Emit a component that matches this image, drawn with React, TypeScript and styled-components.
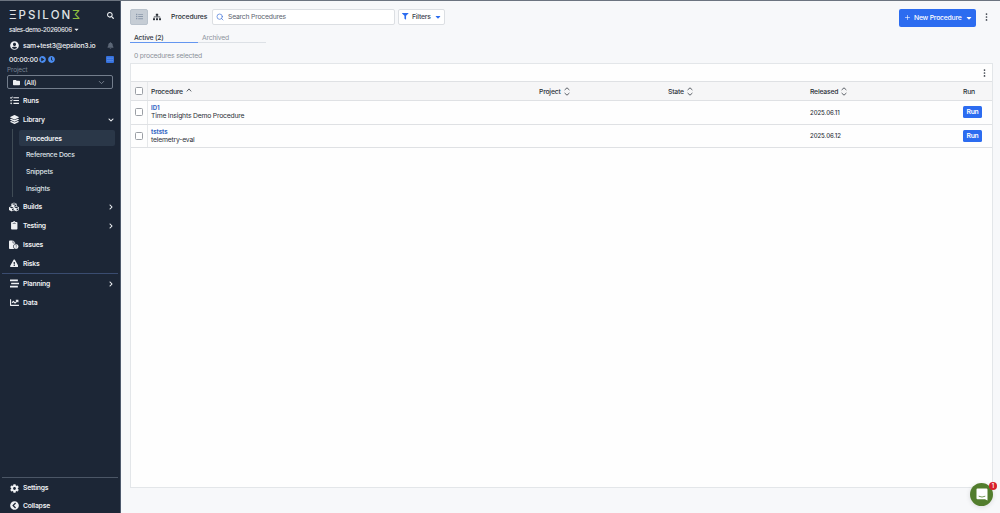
import React from "react";
import styled, { createGlobalStyle, css } from "styled-components";
import {
  FaBell,
  FaCaretDown,
  FaChartLine,
  FaChevronCircleLeft,
  FaChevronDown,
  FaChevronRight,
  FaClipboard,
  FaClock,
  FaCog,
  FaCubes,
  FaExclamationTriangle,
  FaFilter,
  FaFolder,
  FaLayerGroup,
  FaList,
  FaPlayCircle,
  FaSearch,
  FaSitemap,
  FaStream,
  FaTasks,
  FaUserCircle,
} from "react-icons/fa";
import { FaFileCircleExclamation } from "react-icons/fa6";
import { FiChevronDown, FiPlus, FiSearch } from "react-icons/fi";

const GlobalStyle = createGlobalStyle`
  * { box-sizing: border-box; }
  body {
    margin: 0;
    font-family: Inter, "Liberation Sans", sans-serif;
    font-size: 6.8px;
    letter-spacing: -0.2px;
    color: #2b3038;
    background: #f7f8fa;
  }
  svg { display: block; flex: none; }
`;

const Page = styled.div`
  display: flex;
  height: 513px;
  border-top: 1px solid #6c7480;
  overflow: hidden;
`;

const Sidebar = styled.nav`
  display: flex;
  flex-direction: column;
  width: 121px;
  flex: none;
  background: #1c2636;
  color: #eef0f3;
  border-right: 1px solid #4d596c;
`;

const SideLine = styled.div<{ $h: number }>`
  display: flex;
  align-items: center;
  gap: 1.5px;
  height: ${(p) => p.$h}px;
  padding: 0 6px 0 9px;
  font-weight: 500;
  white-space: nowrap;
`;

const BrandLine = styled(SideLine)`
  padding-top: 3px;
`;

const AccountLine = styled(SideLine)`
  gap: 0;
  margin-top: 4px;
`;

const Workspace = styled.span`
  font-size: 6.2px;
  letter-spacing: -0.32px;
`;

const Logo = styled.div`
  display: flex;
  justify-content: space-between;
  width: 71px;
  font-size: 11.5px;
  line-height: 12px;
  letter-spacing: 0;
  font-weight: 500;
  color: #dfe2e5;
`;

const LogoThree = styled.span`
  color: #8fbf3f;
  transform: scaleX(-1);
`;

const Push = styled.span`
  display: flex;
  margin-left: auto;
`;

const Label = styled.div`
  margin-top: 2px;
  padding-left: 7px;
  height: 9px;
  font-size: 6.4px;
  letter-spacing: -0.1px;
  line-height: 9px;
  color: #7b8593;
`;

const ProjectSelect = styled.div`
  display: flex;
  align-items: center;
  gap: 4px;
  height: 14px;
  margin: 0 7px 2px;
  padding: 0 6px 0 5px;
  border: 1px solid #737d8c;
  border-radius: 2px;
  font-weight: 500;
`;

const NavItem = styled.div<{ $h?: number }>`
  display: flex;
  align-items: center;
  flex: none;
  height: ${(p) => p.$h ?? 19}px;
  padding: 0 6px 0 9px;
  font-weight: 600;
  line-height: 10px;
`;

const NavIcon = styled.span`
  display: flex;
  justify-content: center;
  width: 10px;
  margin-right: 4px;
`;

const SubNav = styled.div`
  display: flex;
  flex-direction: column;
  margin-left: 12px;
  padding: 1px 5px 0 6px;
  height: 68px;
  border-left: 1px solid #3f4b55;
`;

const SubItem = styled.div<{ $active?: boolean }>`
  display: flex;
  align-items: center;
  height: 17px;
  padding-left: 7px;
  font-weight: 500;
  color: #dfe3e8;
  border-radius: 2px;
  ${(p) =>
    p.$active &&
    css`
      height: 16px;
      font-weight: 600;
      color: #f2f4f6;
      background: #2a3748;
    `}
`;

const Rule = styled.div<{ $color: string }>`
  height: 1px;
  margin: 0 2px;
  background: ${(p) => p.$color};
`;

const Grow = styled.div`
  flex: 1;
`;

const Main = styled.main`
  display: flex;
  flex-direction: column;
  flex: 1;
  min-width: 0;
  padding: 7px 7px 25px 9px;
`;

const Toolbar = styled.header`
  display: flex;
  align-items: center;
  height: 17px;
  padding-right: 5px;
`;

const ViewToggle = styled.div<{ $active?: boolean }>`
  display: flex;
  align-items: center;
  justify-content: center;
  width: 18px;
  height: 16px;
  border-radius: 2px;
  color: #2b3038;
  ${(p) =>
    p.$active &&
    css`
      color: #8b98aa;
      background: #c6cdd5;
      border: 1px solid #b9c2cc;
    `}
`;

const Title = styled.h1`
  margin: 0 5px;
  width: 36px;
  font-size: 6.8px;
  letter-spacing: -0.1px;
  font-weight: 500;
`;

const SearchBox = styled.div`
  display: flex;
  align-items: center;
  gap: 4px;
  width: 183px;
  height: 16px;
  padding-left: 3px;
  color: #5d6470;
  background: #fff;
  border: 1px solid #dcdfe3;
  border-radius: 2px;
`;

const FilterButton = styled.div`
  display: flex;
  align-items: center;
  gap: 3.500px;
  width: 47px;
  height: 16px;
  margin-left: 3px;
  padding-left: 3px;
  font-weight: 500;
  color: #3b4350;
  background: #fff;
  border: 1px solid #dcdfe3;
  border-radius: 2px;
`;

const PrimaryButton = styled.div`
  display: flex;
  align-items: center;
  gap: 3px;
  width: 77px;
  height: 18px;
  margin: 2px 9px 0 auto;
  padding-left: 5px;
  font-weight: 500;
  white-space: nowrap;
  color: #fff;
  background: #2c6cf0;
  border-radius: 2px;
`;

const Tabs = styled.div`
  display: flex;
  height: 14px;
  margin-top: 4px;
`;

const Tab = styled.div<{ $active?: boolean }>`
  width: 68px;
  height: 14px;
  padding-left: 4px;
  line-height: 17px;
  font-weight: ${(p) => (p.$active ? 500 : 400)};
  color: ${(p) => (p.$active ? "#343a44" : "#8e949d")};
  border-bottom: 1px solid ${(p) => (p.$active ? "#6496f0" : "#dde1e6")};
`;

const Selected = styled.div`
  height: 20px;
  padding: 8px 0 0 4px;
  line-height: 9px;
  color: #8b9199;
`;

const Grid = styled.section`
  display: flex;
  flex-direction: column;
  flex: 1;
  background: #fefefe;
  border: 1px solid #e3e6e9;
`;

const GridBar = styled.div`
  display: flex;
  align-items: center;
  justify-content: flex-end;
  height: 17px;
  padding-right: 6px;
`;

const Row = styled.div<{ $head?: boolean }>`
  display: grid;
  grid-template-columns: 17px 388px 129px 142px 153px 1fr;
  align-items: center;
  height: 23.5px;
  border-bottom: 1px solid #dfe1e4;
  ${(p) =>
    p.$head &&
    css`
      height: 20px;
      font-weight: 500;
      background: #f6f6f7;
      border-top: 1px solid #dfe1e4;
    `}
`;

const CheckCell = styled.div`
  display: flex;
  align-items: center;
  height: 100%;
  padding-left: 4px;
  border-right: 1px solid #e6e8ea;
`;

const Checkbox = styled.span`
  width: 8px;
  height: 8px;
  background: #fff;
  border: 1px solid #9b9fa5;
  border-radius: 1.5px;
`;

const Cell = styled.div`
  display: flex;
  align-items: center;
  gap: 3px;
  padding-left: 3px;
`;

const ProcedureCell = styled.div`
  padding-left: 3px;
  line-height: 8px;
`;

const Code = styled.div`
  font-size: 6px;
  letter-spacing: 0;
  font-weight: 700;
  color: #3465c4;
`;

const DateText = styled.span`
  font-size: 6px;
  letter-spacing: -0.05px;
  font-weight: 500;
`;

const RunButton = styled.span`
  width: 19px;
  height: 12px;
  line-height: 12px;
  text-align: center;
  font-weight: 600;
  color: #fff;
  background: #2c6cf0;
  border-radius: 1.5px;
`;

const ChatButton = styled.div`
  position: absolute;
  left: 970px;
  top: 483px;
  display: flex;
  align-items: center;
  justify-content: center;
  width: 23px;
  height: 23px;
  border-radius: 50%;
  background: #527d2d;
  box-shadow: 0 1px 5px rgba(0, 0, 0, 0.12);
`;

const Badge = styled.span`
  position: absolute;
  left: 19px;
  top: -1px;
  width: 8px;
  height: 8px;
  border-radius: 50%;
  background: #d8202b;
  color: #fff;
  font-size: 5.5px;
  line-height: 8px;
  letter-spacing: 0;
  font-weight: 600;
  text-align: center;
`;

const Dots = () => (
  <svg width="3" height="8" viewBox="0 0 3 8" fill="#3c424b">
    <circle cx="1.5" cy="1.1" r=".85" />
    <circle cx="1.5" cy="4" r=".85" />
    <circle cx="1.5" cy="6.9" r=".85" />
  </svg>
);

const Sort = () => (
  <svg width="6" height="9" viewBox="0 0 6 9" fill="none" stroke="#4b5058" strokeWidth=".9">
    <path d="M.6 3 3 .8 5.4 3M.6 6 3 8.2 5.4 6" />
  </svg>
);

const SortUp = () => (
  <svg width="6" height="7" viewBox="0 0 6 7" fill="none" stroke="#4b5058" strokeWidth=".9">
    <path d="M.8 3.4 3 .9 5.2 3.4" />
  </svg>
);

const Panel = () => (
  <svg width="8" height="7" viewBox="0 0 8 7">
    <rect width="8" height="7" rx="1" fill="#3470dd" />
    <path d="M1.200 2.200h5.600M1.200 4.700h5.600" stroke="#7ba6f0" strokeWidth=".7" strokeDasharray="1.5 .6" />
  </svg>
);

type Entry = { label: string; icon: React.ReactNode; more?: boolean };

const SECTIONS: Entry[] = [
  { label: "Builds", icon: <FaCubes size={10} />, more: true },
  { label: "Testing", icon: <FaClipboard size={8.5} />, more: true },
  { label: "Issues", icon: <FaFileCircleExclamation size={9.5} /> },
  { label: "Risks", icon: <FaExclamationTriangle size={8.5} /> },
];

const PROCEDURES = [
  { code: "ID1", name: "Time Insights Demo Procedure", released: "2025.06.11" },
  { code: "tststs", name: "telemetry-eval", released: "2025.06.12" },
];

const NavEntry = ({ label, icon, more }: Entry) => (
  <NavItem>
    <NavIcon>{icon}</NavIcon>
    {label}
    {more && (
      <Push>
        <FaChevronRight size={6} />
      </Push>
    )}
  </NavItem>
);

export default function App() {
  return (
    <>
      <GlobalStyle />
      <Page>
        <Sidebar>
          <BrandLine $h={25}>
            <Logo>
              {"ΞPSILON".split("").map((c, i) => (
                <span key={i}>{c}</span>
              ))}
              <LogoThree>Σ</LogoThree>
            </Logo>
            <Push>
              <FaSearch size={7} />
            </Push>
          </BrandLine>
          <SideLine $h={6}>
            <Workspace>sales-demo-20260606</Workspace>
            <FaCaretDown size={7} />
          </SideLine>
          <AccountLine $h={18}>
            <NavIcon>
              <FaUserCircle size={9} />
            </NavIcon>
            sam+test3@epsilon3.io
            <Push>
              <FaBell size={7} color="#5b6676" />
            </Push>
          </AccountLine>
          <SideLine $h={10}>
            00:00:00
            <FaPlayCircle size={7} color="#4a8cf0" />
            <FaClock size={7} color="#4a8cf0" />
            <Push>
              <Panel />
            </Push>
          </SideLine>
          <Label>Project</Label>
          <ProjectSelect>
            <FaFolder size={7} />
            (All)
            <Push>
              <FiChevronDown size={9} color="#8f98a5" />
            </Push>
          </ProjectSelect>
          <NavEntry label="Runs" icon={<FaTasks size={9} />} />
          <NavItem>
            <NavIcon>
              <FaLayerGroup size={9} />
            </NavIcon>
            Library
            <Push>
              <FaChevronDown size={6} />
            </Push>
          </NavItem>
          <SubNav>
            <SubItem $active>Procedures</SubItem>
            <SubItem>Reference Docs</SubItem>
            <SubItem>Snippets</SubItem>
            <SubItem>Insights</SubItem>
          </SubNav>
          {SECTIONS.map((s) => (
            <NavEntry key={s.label} {...s} />
          ))}
          <Rule $color="#3a4c70" />
          <NavEntry label="Planning" icon={<FaStream size={9} />} more />
          <NavEntry label="Data" icon={<FaChartLine size={9} />} />
          <Grow />
          <Rule $color="#4b5666" />
          <NavItem $h={20}>
            <NavIcon>
              <FaCog size={9} />
            </NavIcon>
            Settings
          </NavItem>
          <NavItem $h={15}>
            <NavIcon>
              <FaChevronCircleLeft size={9} />
            </NavIcon>
            Collapse
          </NavItem>
        </Sidebar>
        <Main>
          <Toolbar>
            <ViewToggle $active>
              <FaList size={7} />
            </ViewToggle>
            <ViewToggle>
              <FaSitemap size={8} />
            </ViewToggle>
            <Title>Procedures</Title>
            <SearchBox>
              <FiSearch size={8} color="#3c6fd8" />
              Search Procedures
            </SearchBox>
            <FilterButton>
              <FaFilter size={6.5} color="#2c6cf0" />
              Filters
              <FaCaretDown size={8} color="#2c6cf0" />
            </FilterButton>
            <PrimaryButton>
              <FiPlus size={7} />
              New Procedure
              <FaCaretDown size={8} />
            </PrimaryButton>
            <Dots />
          </Toolbar>
          <Tabs>
            <Tab $active>Active (2)</Tab>
            <Tab>Archived</Tab>
          </Tabs>
          <Selected>0 procedures selected</Selected>
          <Grid>
            <GridBar>
              <Dots />
            </GridBar>
            <Row $head>
              <CheckCell>
                <Checkbox />
              </CheckCell>
              <Cell>
                Procedure <SortUp />
              </Cell>
              <Cell>
                Project <Sort />
              </Cell>
              <Cell>
                State <Sort />
              </Cell>
              <Cell>
                Released <Sort />
              </Cell>
              <Cell>Run</Cell>
            </Row>
            {PROCEDURES.map((p) => (
              <Row key={p.code}>
                <CheckCell>
                  <Checkbox />
                </CheckCell>
                <ProcedureCell>
                  <Code>{p.code}</Code>
                  {p.name}
                </ProcedureCell>
                <Cell />
                <Cell />
                <Cell>
                  <DateText>{p.released}</DateText>
                </Cell>
                <Cell>
                  <RunButton>Run</RunButton>
                </Cell>
              </Row>
            ))}
          </Grid>
        </Main>
        <ChatButton>
          <svg width="12" height="13" viewBox="0 0 12 13">
            <path d="M1.5.5h9a1 1 0 0 1 1 1v11L9 11.2H1.500a1 1 0 0 1-1-1V1.500a1 1 0 0 1 1-1Z" fill="#fff" />
            <path d="M2.700 8.200q3.300 1.700 6.600 0" fill="none" stroke="#527d2d" strokeWidth=".8" />
          </svg>
          <Badge>1</Badge>
        </ChatButton>
      </Page>
    </>
  );
}
